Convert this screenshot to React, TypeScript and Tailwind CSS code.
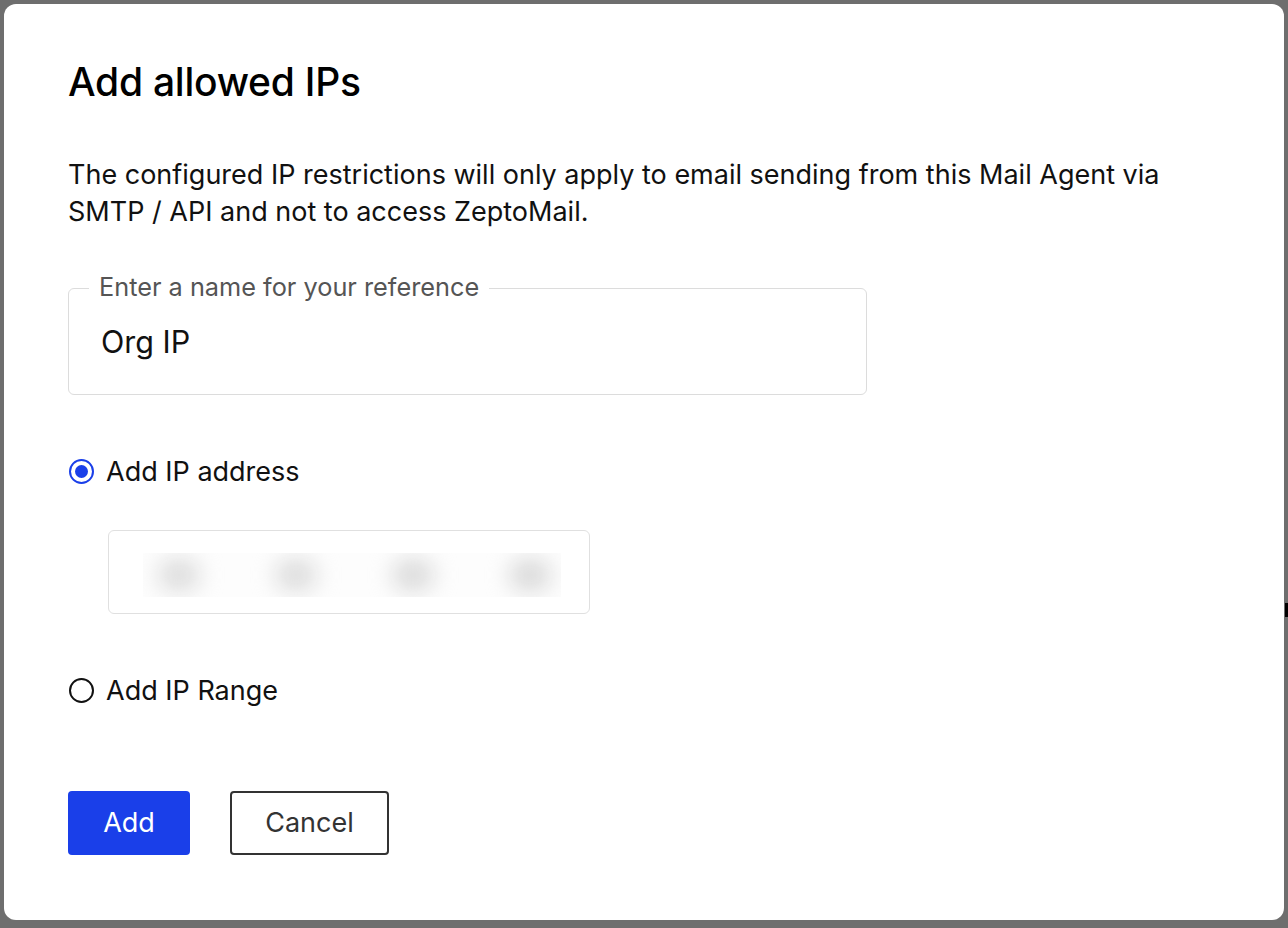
import React from "react";

export default function App() {
  return (
    <div
      className="relative w-[1288px] h-[928px] bg-[#6e6e6e] pt-[4px] pl-[4px]"
      style={{ fontFamily: "Inter, 'Noto Sans', sans-serif" }}
    >
      <div className="absolute left-[1285px] top-[603px] w-[3px] h-[14px] bg-black" />
      <div className="w-[1280px] h-[916px] bg-white rounded-[12px] pl-[64px] pt-[54px] text-[#111]">
        <h1 className="text-[39px] leading-[48px] font-medium text-black tracking-[-0.25px]">
          Add allowed IPs
        </h1>
        <p className="mt-[50px] text-[27px] leading-[37px] w-[1120px]">
          The configured IP restrictions will only apply to email sending from this Mail Agent via
          SMTP / API and not to access ZeptoMail.
        </p>

        <div className="relative mt-[58px] w-[799px] h-[107px] border border-[#dcdcdc] rounded-[6px] flex items-center pl-[32px]">
          <span className="absolute left-[20px] -top-[15px] bg-white px-[10px] text-[25.3px] leading-[26px] text-[#555]">
            Enter a name for your reference
          </span>
          <span className="text-[30.5px] leading-[36px]">Org IP</span>
        </div>

        <div className="mt-[58px] flex items-center h-[37px]">
          <span className="w-[25px] h-[25px] ml-[1px] rounded-full border-[2px] border-[#1a3fe9] flex items-center justify-center">
            <span className="w-[13px] h-[13px] rounded-full bg-[#1a3fe9]" />
          </span>
          <span className="ml-[12px] text-[27px] leading-[37px]">Add IP address</span>
        </div>

        <div className="mt-[40px] ml-[40px] w-[482px] h-[84px] border-[1.5px] border-[#e0e0e0] rounded-[6px] pl-[34px] pt-[22px]">
          <div className="w-[418px] h-[44px] bg-[#fdfdfd] flex items-center overflow-hidden">
            <span className="ml-[15px] w-[42px] h-[32px] rounded-full bg-[#dcdcdc] blur-[11px]" />
            <span className="ml-[75px] w-[42px] h-[32px] rounded-full bg-[#dcdcdc] blur-[11px]" />
            <span className="ml-[75px] w-[42px] h-[32px] rounded-full bg-[#dadada] blur-[11px]" />
            <span className="ml-[75px] w-[42px] h-[32px] rounded-full bg-[#d9d9d9] blur-[11px]" />
          </div>
        </div>

        <div className="mt-[58px] flex items-center h-[37px]">
          <span className="w-[25px] h-[25px] ml-[1px] rounded-full border-[2px] border-[#111]" />
          <span className="ml-[12px] text-[27px] leading-[37px]">Add IP Range</span>
        </div>

        <div className="mt-[82px] flex items-center">
          <button className="w-[122px] h-[64px] bg-[#1a3fe9] rounded-[4px] text-white text-[27px] leading-[34px]">
            Add
          </button>
          <button className="ml-[40px] w-[159px] h-[64px] border-[2px] border-[#333] rounded-[4px] text-[#333] text-[27px] leading-[34px] bg-white">
            Cancel
          </button>
        </div>
      </div>
    </div>
  );
}
